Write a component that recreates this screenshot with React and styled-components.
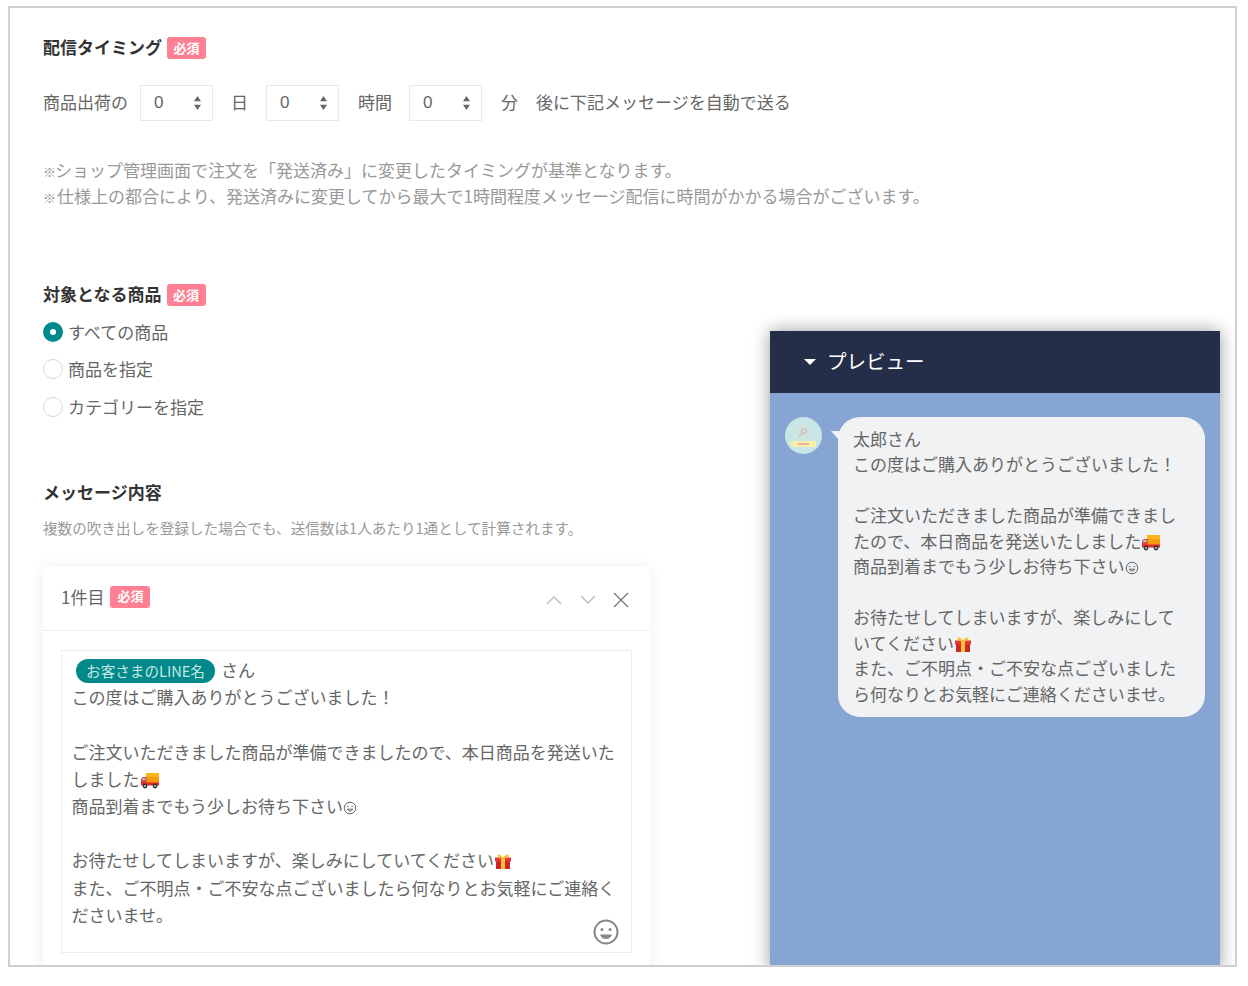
import React from "react";
import styled, { createGlobalStyle } from "styled-components";

const Global = createGlobalStyle`
  html, body { margin: 0; padding: 0; background: #fff; }
  body { font-family: "Noto Sans CJK JP", "Noto Sans", sans-serif; color: #666; }
  * { box-sizing: border-box; }
`;
const Frame = styled.div`
  margin: 6px 0 0 8px; width: 1229px; height: 961px; border: 2px solid #cfcfcf;
  overflow: hidden; background: #fff; font-size: 17px;
`;
const Top = styled.section`padding: 29px 0 0 33px;`;
const Title = styled.div`
  display: flex; align-items: center; gap: 5px; height: 22px;
  font-weight: 700; color: #333; font-size: 17px;
`;
const TitleText = styled.span`line-height: 18px; margin-bottom: 2px;`;
const Badge = styled.span`
  display: inline-flex; align-items: center; justify-content: center;
  width: 39px; height: 22px; padding-bottom: 2px; border-radius: 3px; background: #ff7f93; color: #fff;
  font-size: 13px; font-weight: 700;
`;
const TimingRow = styled.div`
  display: flex; align-items: center; height: 36px; margin-top: 26px; white-space: nowrap;
`;
const Label = styled.span`margin-left: ${p => p.$l || 0}px; line-height: 33px; height: 36px;`;
const SelectBox = styled.div`
  width: 73px; height: 36px; margin-left: ${p => p.$l}px; padding: 0 10px 0 13px; border: 1px solid #e9e9e9;
  display: flex; align-items: center; justify-content: space-between; color: #666;
  font-family: "Liberation Sans", sans-serif; font-size: 17px;
`;
const Notes = styled.p`margin: 36px 0 0; font-size: 17px; line-height: 26px; color: #999; white-space: nowrap;`;
const NoteMark = styled.span`display: inline-block; width: ${p => p.$w}px; font-size: 13px; line-height: 1;`;
const Bottom = styled.div`display: flex; margin-top: 75px; align-items: flex-start;`;
const Left = styled.div`width: 640px; padding-left: 33px; flex: none;`;
const Radios = styled.div`margin-top: 7px; display: flex; flex-direction: column;`;
const RadioRow = styled.div`display: flex; align-items: center; gap: 5px; height: 37.5px; line-height: 34px;`;
const RadioDot = styled.span`
  width: 20px; height: 20px; border-radius: 50%; flex: none;
  border: ${p => (p.$on ? "7.5px solid #00898a" : "1px solid #d8d8d8")}; background: #fff;
`;
const Spaced = styled(Title)`margin-top: 56px;`;
const Sub = styled.p`margin: 14px 0 0; font-size: 14.6px; line-height: 19px; color: #999; white-space: nowrap;`;
const Card = styled.div`margin-top: 30px; width: 607px; background: #fff; box-shadow: 0 0 14px rgba(0,0,0,.07);`;
const CardHead = styled.div`
  height: 64px; padding: 0 21px 0 18px; border-bottom: 1px solid #eee;
  display: flex; align-items: center; gap: 6px; padding-bottom: 3px;
`;
const CardTitle = styled.span`line-height: 20px;`;
const CardBadge = styled(Badge)`width: 40px;`;
const IconGroup = styled.div`margin-left: auto; display: flex; align-items: center; gap: 14px; margin-top: 6px;`;
const CardBody = styled.div`padding: 19px 18px 20px;`;
const Editor = styled.div`
  position: relative; height: 303px; border: 1px solid #ececec; padding: 5.5px 9.5px;
  line-height: 27.2px; white-space: nowrap; color: #666;
`;
const Pill = styled.span`
  display: inline-block; width: 139px; height: 24px; line-height: 24px; margin: 0 6px 0 4.5px; text-align: center;
  background: #00898a; color: #c9e6e4; border-radius: 12px; font-size: 14.6px;
`;
const Smile = styled.svg`position: absolute; right: 12px; bottom: 7px;`;
const Preview = styled.aside`
  margin: 47px 0 0 120px; width: 450px; height: 640px; flex: none;
  box-shadow: 0 0 18px rgba(0,0,0,.4); border-radius: 2px 2px 0 0; background: #87a5d3;
`;
const PreviewHead = styled.div`
  height: 62px; background: #252e48; color: #fff; display: flex; align-items: center; gap: 11px;
  padding-left: 34px; font-size: 19.5px; line-height: 24px; padding-bottom: 2px;
`;
const Caret = styled.span`
  width: 0; height: 0; border-left: 6.5px solid transparent; border-right: 6.5px solid transparent; border-top: 6px solid #fff;
  margin-top: 2px;
`;
const Chat = styled.div`display: flex; align-items: flex-start; gap: 16px; padding: 24px 15px;`;
const Avatar = styled.svg`flex: none;`;
const Bubble = styled.div`
  position: relative; width: 367px; height: 300px; padding: 8.5px 15px; border-radius: 22px; background: #f1f2f4;
  line-height: 25.5px; color: #666; white-space: nowrap; font-size: 17px;
  &::before {
    content: ""; position: absolute; left: -7px; top: 14px; width: 0; height: 0;
    border-top: 9px solid #f1f2f4; border-left: 8px solid transparent;
  }
`;
const Emoji = styled.svg`display: inline-block; vertical-align: -3px;`;
const SmallEmoji = styled(Emoji)`vertical-align: -2px;`;
const CloseIcon = styled.svg`margin-left: 1px;`;

const Stepper = () => (
  <svg width="9" height="16" viewBox="0 0 9 16"><path d="M4.500 1 8 6.200H1z M4.500 15 8 9.800H1z" fill="#666" /></svg>
);
const Chevron = ({ up }) => (
  <svg width="20" height="14" viewBox="0 0 20 14" fill="none" stroke="#bdbdbd" strokeWidth="1.400">
    <path d={up ? "M3 11 10 4l7 7" : "M3 3l7 7 7-7"} />
  </svg>
);
const Close = () => (
  <CloseIcon width="16" height="16" viewBox="0 0 16 16" fill="none" stroke="#777" strokeWidth="1.400"><path d="M1 1l14 14M15 1 1 15" /></CloseIcon>
);
const Truck = () => (
  <Emoji width="19" height="17" viewBox="0 0 19 17">
    <rect x="6" y="1" width="13" height="10" rx="1" fill="#f59a0c" />
    <rect x="6" y="1" width="13" height="4" fill="#fdb515" />
    <path d="M1 6.500 3 5h3.500v6H1z" fill="#e53935" />
    <path d="M2.500 6h3v2.300h-3.800z" fill="#8fd0ea" />
    <rect x="1" y="10.500" width="18" height="3" fill="#e0272c" />
    <circle cx="5" cy="14" r="2.400" fill="#333" /><circle cx="15" cy="14" r="2.400" fill="#333" />
    <circle cx="5" cy="14" r=".9" fill="#ddd" /><circle cx="15" cy="14" r=".9" fill="#ddd" />
  </Emoji>
);
const Gift = () => (
  <Emoji width="18" height="17" viewBox="0 0 18 17">
    <rect x="2" y="7" width="14" height="9" fill="#c9272d" />
    <rect x="1" y="4.500" width="16" height="4" fill="#e23a36" />
    <rect x="7" y="4.500" width="4" height="11.500" fill="#fbc02d" />
    <path d="M9 4.500C6 .5 3 .8 3.500 3S7 5 9 4.500C12 .5 15 .8 14.500 3S11 5 9 4.500z" fill="#fbc02d" />
  </Emoji>
);
const Blush = () => (
  <SmallEmoji width="14" height="14" viewBox="0 0 14 14" fill="none" stroke="#666" strokeWidth="1">
    <circle cx="7" cy="7" r="5.800" />
    <path d="M3.600 5.800q1-1 2 0M8.400 5.800q1-1 2 0M4 8.200q3 3.600 6 0z" />
  </SmallEmoji>
);

const Field = ({ l }) => (
  <SelectBox $l={l}><span>0</span><Stepper /></SelectBox>
);

export default function App() {
  return (
    <>
      <Global />
      <Frame>
        <Top>
          <Title><TitleText>配信タイミング</TitleText><Badge>必須</Badge></Title>
          <TimingRow>
            <Label>商品出荷の</Label>
            <Field l={12} />
            <Label $l={18}>日</Label>
            <Field l={18} />
            <Label $l={19}>時間</Label>
            <Field l={17} />
            <Label $l={19}>分</Label>
            <Label $l={18}>後に下記メッセージを自動で送る</Label>
          </TimingRow>
          <Notes>
            <NoteMark $w={12}>※</NoteMark>ショップ管理画面で注文を「発送済み」に変更したタイミングが基準となります。<br />
            <NoteMark $w={14}>※</NoteMark>仕様上の都合により、発送済みに変更してから最大で1時間程度メッセージ配信に時間がかかる場合がございます。
          </Notes>
        </Top>
        <Bottom>
          <Left>
            <Title><TitleText>対象となる商品</TitleText><Badge>必須</Badge></Title>
            <Radios>
              <RadioRow><RadioDot $on />すべての商品</RadioRow>
              <RadioRow><RadioDot />商品を指定</RadioRow>
              <RadioRow><RadioDot />カテゴリーを指定</RadioRow>
            </Radios>
            <Spaced><TitleText>メッセージ内容</TitleText></Spaced>
            <Sub>複数の吹き出しを登録した場合でも、送信数は1人あたり1通として計算されます。</Sub>
            <Card>
              <CardHead>
                <CardTitle>1件目</CardTitle>
                <CardBadge>必須</CardBadge>
                <IconGroup><Chevron up /><Chevron /><Close /></IconGroup>
              </CardHead>
              <CardBody>
                <Editor>
                  <Pill>お客さまのLINE名</Pill>さん<br />
                  この度はご購入ありがとうございました！<br /><br />
                  ご注文いただきました商品が準備できましたので、本日商品を発送いた<br />
                  しました<Truck /><br />
                  商品到着までもう少しお待ち下さい<Blush /><br /><br />
                  お待たせしてしまいますが、楽しみにしていてください<Gift /><br />
                  また、ご不明点・ご不安な点ございましたら何なりとお気軽にご連絡く<br />
                  ださいませ。
                  <Smile width="26" height="26" viewBox="0 0 26 26" fill="none" stroke="#888" strokeWidth="2">
                    <circle cx="13" cy="13" r="11.500" />
                    <circle cx="9" cy="10.500" r="1.500" fill="#888" stroke="none" />
                    <circle cx="17" cy="10.500" r="1.500" fill="#888" stroke="none" />
                    <path d="M7 15.500h12c-1 3-3.500 4.500-6 4.500s-5-1.500-6-4.500z" fill="#888" stroke="none" />
                  </Smile>
                </Editor>
              </CardBody>
            </Card>
          </Left>
          <Preview>
            <PreviewHead><Caret />プレビュー</PreviewHead>
            <Chat>
              <Avatar width="37" height="37" viewBox="0 0 37 37">
                <circle cx="18.500" cy="18.500" r="18.500" fill="#c9e6e6" />
                <circle cx="18.500" cy="15" r="6.500" fill="none" stroke="#e6dfc0" strokeWidth=".8" />
                <circle cx="19" cy="14" r="2.600" fill="none" stroke="#e6a6b0" strokeWidth="1" />
                <path d="M17 16l-3 4" stroke="#e6a6b0" strokeWidth="1" />
                <rect x="6" y="24" width="25" height="6" fill="#f9f0a8" />
                <rect x="13" y="26" width="11" height="2" fill="#ecb0a8" />
              </Avatar>
              <Bubble>
                太郎さん<br />
                この度はご購入ありがとうございました！<br /><br />
                ご注文いただきました商品が準備できまし<br />
                たので、本日商品を発送いたしました<Truck /><br />
                商品到着までもう少しお待ち下さい<Blush /><br /><br />
                お待たせしてしまいますが、楽しみにして<br />
                いてください<Gift /><br />
                また、ご不明点・ご不安な点ございました<br />
                ら何なりとお気軽にご連絡くださいませ。
              </Bubble>
            </Chat>
          </Preview>
        </Bottom>
      </Frame>
    </>
  );
}
